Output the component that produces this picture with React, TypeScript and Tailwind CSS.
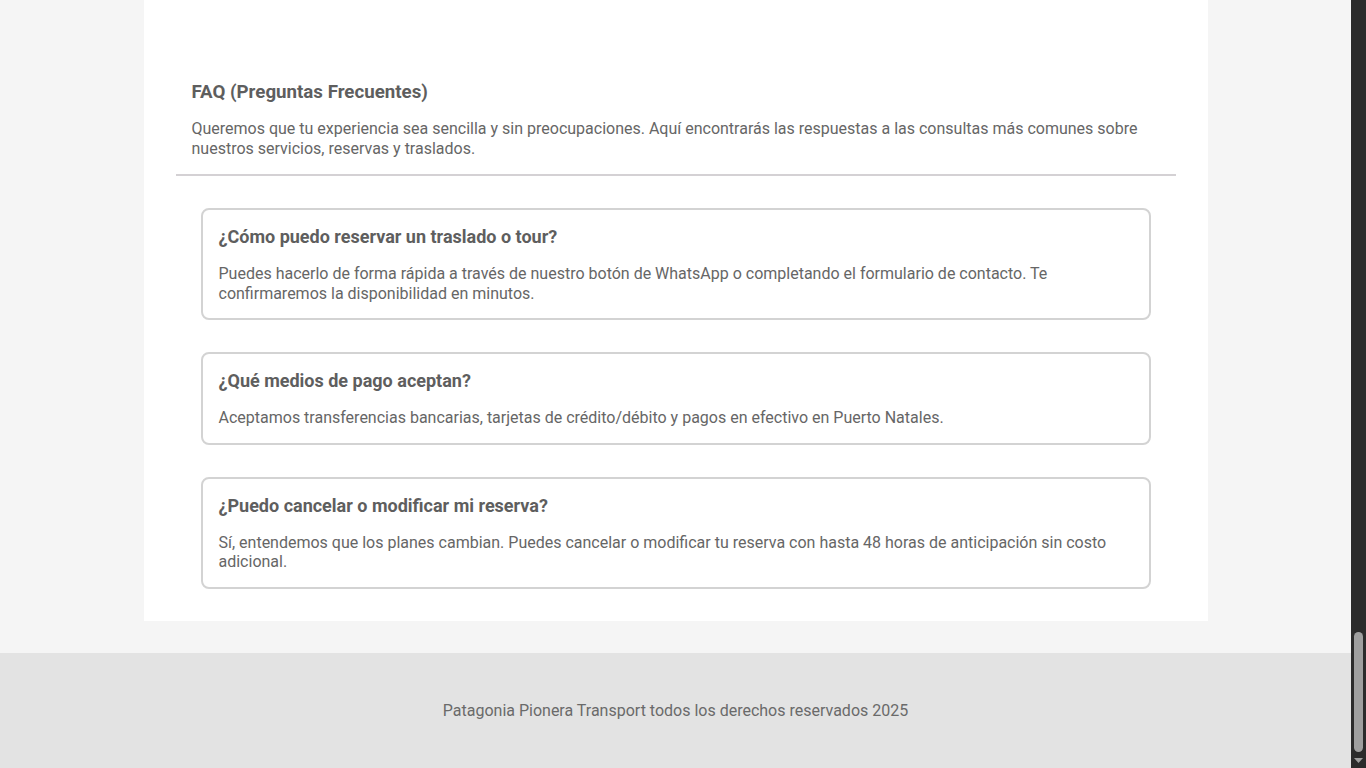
import React from "react";

const faqs = [
  {
    q: "¿Cómo puedo reservar un traslado o tour?",
    a: "Puedes hacerlo de forma rápida a través de nuestro botón de WhatsApp o completando el formulario de contacto. Te confirmaremos la disponibilidad en minutos.",
  },
  {
    q: "¿Qué medios de pago aceptan?",
    a: "Aceptamos transferencias bancarias, tarjetas de crédito/débito y pagos en efectivo en Puerto Natales.",
  },
  {
    q: "¿Puedo cancelar o modificar mi reserva?",
    a: "Sí, entendemos que los planes cambian. Puedes cancelar o modificar tu reserva con hasta 48 horas de anticipación sin costo adicional.",
  },
];

export default function App() {
  return (
    <div
      className="flex h-[768px] w-full overflow-hidden bg-[#f5f5f5]"
      style={{ fontFamily: "Roboto, 'Liberation Sans', sans-serif" }}
    >
      <div className="flex flex-1 flex-col">
        <div className="flex justify-center">
          <section className="w-[1064px] bg-white px-8 pt-[81px]">
            <div className="px-4">
              <h2 className="text-[18.72px] font-bold leading-[1.2] text-[#5e5e5e]">
                FAQ (Preguntas Frecuentes)
              </h2>
              <p className="mt-4 mb-4 text-[16px] leading-[1.2] text-[#666666]">
                Queremos que tu experiencia sea sencilla y sin preocupaciones. Aquí encontrarás las respuestas a las consultas más comunes sobre nuestros servicios, reservas y traslados.
              </p>
            </div>
            <div className="h-[2px] bg-[#d4d1d4]" />
            <div className="flex flex-col gap-8 px-[25px] py-8">
              {faqs.map((f) => (
                <div
                  key={f.q}
                  className="rounded-lg border-2 border-[#d3d3d3] bg-white px-4 pt-4 pb-[15px]"
                >
                  <h3 className="mb-[17px] text-[18px] font-bold leading-[1.2] text-[#5e5e5e]">
                    {f.q}
                  </h3>
                  <p className="text-[16px] leading-[1.2] text-[#666666]">{f.a}</p>
                </div>
              ))}
            </div>
          </section>
        </div>
        <footer className="mt-8 flex-1 bg-[#e3e3e3] pt-12 text-center text-[16px] leading-[1.2] text-[#6a6a6a]">
          Patagonia Pionera Transport todos los derechos reservados 2025
        </footer>
      </div>
      <aside className="flex w-[15px] flex-col items-center justify-end bg-[#2b2b2b] pb-[4px]">
        <div className="h-[120px] w-[9px] rounded-full bg-[#9f9f9f]" />
        <svg width="9" height="6" viewBox="0 0 9 6" className="mt-[6px]">
          <polygon points="0,0 9,0 4.5,5" fill="#9f9f9f" />
        </svg>
      </aside>
    </div>
  );
}
